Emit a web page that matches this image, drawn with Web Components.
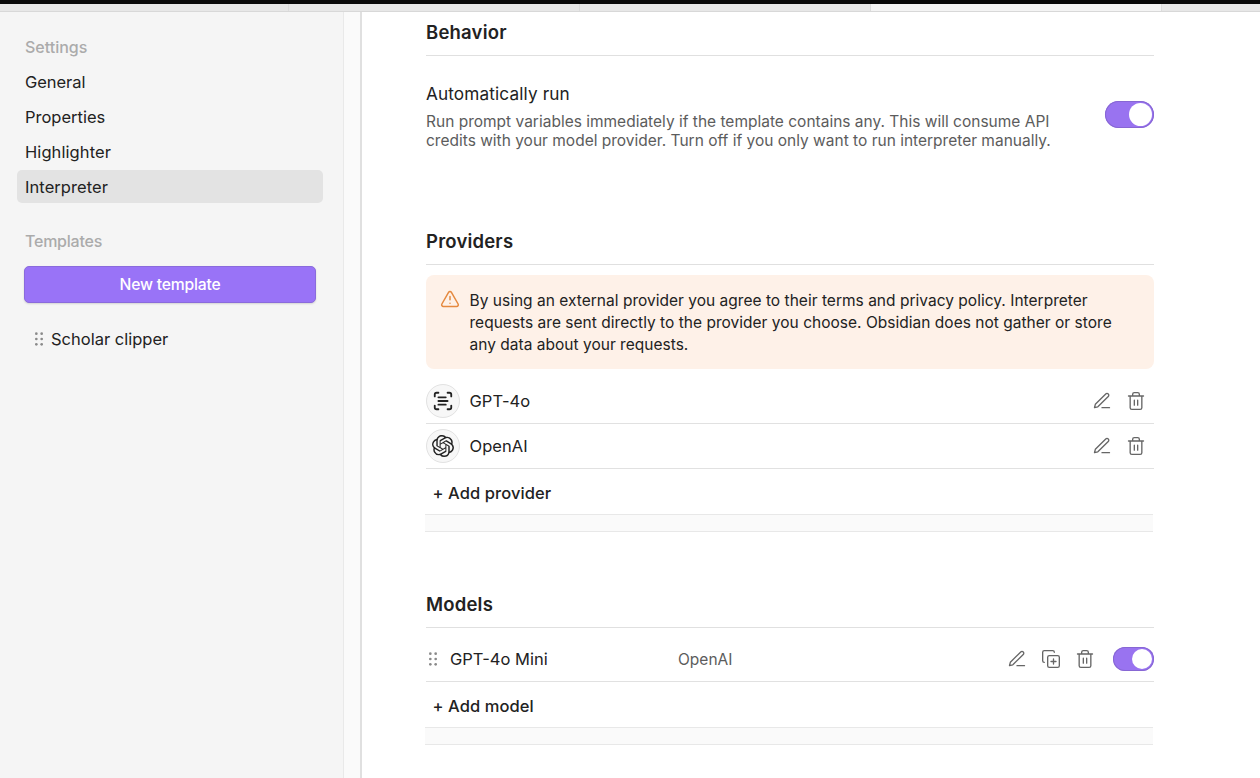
<!DOCTYPE html>
<html lang="en">
<head>
<meta charset="utf-8">
<title>Interpreter settings</title>
<style>
  html, body { margin: 0; height: 100%; overflow: hidden; }
  body { font-family: Inter, "Liberation Sans", sans-serif; color: #222; background: #fff; }
</style>
</head>
<body>
<settings-app></settings-app>
<script>
const define = (name, html, init) => {
  const tpl = document.createElement('template');
  tpl.innerHTML = html;
  customElements.define(name, class extends HTMLElement {
    constructor() {
      super();
      this.attachShadow({ mode: 'open' }).append(tpl.content.cloneNode(true));
    }
    connectedCallback() { if (init) init(this, this.shadowRoot); }
  });
};

const OPENAI = '<path fill="currentColor" stroke="none" d="M22.2819 9.8211a5.9847 5.9847 0 0 0-.5157-4.9108 6.0462 6.0462 0 0 0-6.5098-2.9A6.0651 6.0651 0 0 0 4.9807 4.1818a5.9847 5.9847 0 0 0-3.9977 2.9 6.0462 6.0462 0 0 0 .7427 7.0966 5.98 5.98 0 0 0 .511 4.9107 6.051 6.051 0 0 0 6.5146 2.9001A5.9847 5.9847 0 0 0 13.2599 24a6.0557 6.0557 0 0 0 5.7718-4.2058 5.9894 5.9894 0 0 0 3.9977-2.9001 6.0557 6.0557 0 0 0-.7475-7.0729zm-9.022 12.6081a4.4755 4.4755 0 0 1-2.8764-1.0408l.1419-.0804 4.7783-2.7582a.7948.7948 0 0 0 .3927-.6813v-6.7369l2.02 1.1686a.071.071 0 0 1 .038.052v5.5826a4.504 4.504 0 0 1-4.4945 4.4944zm-9.6607-4.1254a4.4708 4.4708 0 0 1-.5346-3.0137l.142.0852 4.783 2.7582a.7712.7712 0 0 0 .7806 0l5.8428-3.3685v2.3324a.0804.0804 0 0 1-.0332.0615L9.74 19.9502a4.4992 4.4992 0 0 1-6.1408-1.6464zM2.3408 7.8956a4.485 4.485 0 0 1 2.3655-1.9728V11.6a.7664.7664 0 0 0 .3879.6765l5.8144 3.3543-2.0201 1.1685a.0757.0757 0 0 1-.071 0l-4.8303-2.7865A4.504 4.504 0 0 1 2.3408 7.872zm16.5963 3.8558L13.1038 8.364 15.1192 7.2a.0757.0757 0 0 1 .071 0l4.8303 2.7913a4.4944 4.4944 0 0 1-.6765 8.1042v-5.6772a.79.79 0 0 0-.407-.667zm2.0107-3.0231l-.142-.0852-4.7735-2.7818a.7759.7759 0 0 0-.7854 0L9.409 9.2297V6.8974a.0662.0662 0 0 1 .0284-.0615l4.8303-2.7866a4.4992 4.4992 0 0 1 6.6802 4.66zM8.3065 12.863l-2.02-1.1638a.0804.0804 0 0 1-.038-.0567V6.0742a4.4992 4.4992 0 0 1 7.3757-3.4537l-.142.0805L8.704 5.459a.7948.7948 0 0 0-.3927.6813zm1.0976-2.3654l2.602-1.4998 2.6069 1.4998v2.9994l-2.5974 1.4997-2.6067-1.4997Z"/>';
const ICONS = {
  pen: '<path d="M12 20h9M16.5 3.5a2.121 2.121 0 0 1 3 3L7 19l-4 1 1-4Z"/>',
  trash: '<path d="M3 6h18M19 6v14a2 2 0 0 1-2 2H7a2 2 0 0 1-2-2V6M8 6V4a2 2 0 0 1 2-2h4a2 2 0 0 1 2 2v2M10 11v6M14 11v6"/>',
  copy: '<path d="M15 12v6M12 15h6"/><rect x="8" y="8" width="14" height="14" rx="2"/><path d="M4 16a2 2 0 0 1-2-2V4a2 2 0 0 1 2-2h10a2 2 0 0 1 2 2"/>',
  warn: '<path d="m21.73 18-8-14a2 2 0 0 0-3.48 0l-8 14A2 2 0 0 0 4 21h16a2 2 0 0 0 1.73-3M12 9v4M12 17h.01"/>',
  scan: '<path d="M3 7V5a2 2 0 0 1 2-2h2M17 3h2a2 2 0 0 1 2 2v2M21 17v2a2 2 0 0 1-2 2h-2M7 21H5a2 2 0 0 1-2-2v-2M7 8h8M7 12h10M7 16h8"/>',
  grip: '<g fill="currentColor" stroke="none"><circle cx="8" cy="4" r="2"/><circle cx="16" cy="4" r="2"/><circle cx="8" cy="12" r="2"/><circle cx="16" cy="12" r="2"/><circle cx="8" cy="20" r="2"/><circle cx="16" cy="20" r="2"/></g>',
  openai: OPENAI
};

define('ui-icon', `<style>
  :host { display: block; flex: none; width: var(--size, 20px); height: var(--size, 20px); }
  svg { display: block; width: 100%; height: 100%; fill: none; stroke: currentColor;
        stroke-width: var(--stroke, 1.6); stroke-linecap: round; stroke-linejoin: round; }
</style><svg viewBox="0 0 24 24"></svg>`, (el, root) => {
  root.querySelector('svg').innerHTML = ICONS[el.getAttribute('name')];
});

define('tab-strip', `<style>
  :host { display: grid; grid-template-columns: 288px 1px 290px 1px 290px 1px 290px 1px 1fr;
          height: 7px; border-top: 4px solid #080808; border-bottom: 1px solid #d8d8d8; background: #e7e7e7; flex: none; box-sizing: content-box; }
  i { background: #dcdcdc; } b { background: #f4f4f4; }
</style><span></span><i></i><span></span><i></i><span></span><i></i><b></b><i></i><span></span>`);

define('nav-title', `<style>
  :host { display: flex; align-items: center; height: 35px; margin-bottom: 1px; padding-left: 8px; font-size: 16px; font-weight: 500; color: #ababab; }
</style><slot></slot>`);

define('nav-item', `<style>
  :host { display: flex; align-items: center; height: 33px; margin-bottom: 2px; padding-left: 8px; border-radius: 5px; font-size: 16.5px; }
  :host([active]) { background: #e3e3e3; }
</style><slot></slot>`);

define('template-item', `<style>
  :host { display: flex; align-items: center; height: 34px; padding-left: 14px; gap: 4px; font-size: 16.5px; }
  ui-icon { --size: 16px; color: #8a8a8a; }
</style><ui-icon name="grip"></ui-icon><slot></slot>`);

define('primary-button', `<style>
  :host { display: flex; align-items: center; justify-content: center; height: 37px; margin: 0 7px; box-sizing: border-box;
          border: 1px solid #8a6bdc; border-radius: 5px; background: #9973f7; color: #fff; font-size: 15.7px; font-weight: 500; letter-spacing: -.2px;
          box-shadow: 0 1px 2px rgba(0,0,0,.14); }
</style><slot></slot>`);

define('side-bar', `<style>
  :host { display: block; width: 344px; box-sizing: border-box; padding: 17px 20px 0 17px; background: #f5f5f5; border-right: 1px solid #e9e9e9; flex: none; }
  .templates { margin-top: 20px; margin-bottom: 8px; letter-spacing: -.23px; }
  template-item { margin-top: 19px; }
</style>
<nav-title>Settings</nav-title>
<nav-item style="letter-spacing:-.05px">General</nav-item>
<nav-item>Properties</nav-item>
<nav-item style="letter-spacing:.08px">Highlighter</nav-item>
<nav-item active style="letter-spacing:.07px">Interpreter</nav-item>
<nav-title class="templates">Templates</nav-title>
<primary-button>New template</primary-button>
<template-item>Scholar clipper</template-item>`);

define('section-title', `<style>
  :host { display: flex; align-items: center; height: 46px; border-bottom: 1px solid #e0e0e0; font-size: 18.5px; font-weight: 600; letter-spacing: .2px; }
</style><slot></slot>`);

define('toggle-switch', `<style>
  :host { display: flex; justify-content: flex-end; align-items: center; flex: none; width: var(--w, 49px); height: var(--h, 27px); padding-right: 2px;
          box-sizing: border-box; border-radius: 20px; background: #9973f0; box-shadow: inset 0 0 0 1px #8767d3; }
  i { width: var(--k, 23px); height: var(--k, 23px); border-radius: 50%; background: #fff; }
</style><i></i>`);

define('setting-row', `<style>
  :host { display: flex; justify-content: space-between; }
  .name { display: block; font-size: 17.2px; line-height: 24px; letter-spacing: .13px; }
  .desc { display: block; margin-top: 5.5px; font-size: 15.5px; line-height: 19.5px; color: #5c5c5c; white-space: nowrap; }
  toggle-switch { margin-top: 19px; }
</style><div><slot class="name" name="name"></slot><slot class="desc"></slot></div><toggle-switch></toggle-switch>`);

define('call-out', `<style>
  :host { display: flex; box-sizing: border-box; height: 94px; padding: 14px 14px 0; border-radius: 8px; background: #fef1e8;
          font-size: 15.5px; line-height: 22px; letter-spacing: .018px; white-space: nowrap; }
  ui-icon { --stroke: 1.8; margin-right: 9.5px; color: #e5893f; }
  div { padding-top: 1px; }
</style><ui-icon name="warn"></ui-icon><div><slot></slot></div>`);

define('provider-row', `<style>
  :host { display: flex; align-items: center; height: 44px; border-bottom: 1px solid #e1e1e1; font-size: 16.5px; letter-spacing: .04px; }
  .badge { display: grid; place-items: center; width: 34px; height: 34px; margin-right: 9.5px; box-sizing: border-box; border: 1px solid #e2e2e2; border-radius: 50%; background: #f7f7f7; }
  .badge ui-icon { --size: 22px; --stroke: 2; }
  .tools { display: flex; gap: 14px; margin-left: auto; padding-right: 8px; color: #666; }
</style><span class="badge"><ui-icon></ui-icon></span><slot></slot><span class="tools"><ui-icon name="pen"></ui-icon><ui-icon name="trash"></ui-icon></span>`, (el, root) => {
  const i = document.createElement('ui-icon');
  i.setAttribute('name', el.getAttribute('icon'));
  root.querySelector('.badge').replaceChildren(i);
});

define('model-row', `<style>
  :host { display: flex; align-items: center; height: 44px; border-bottom: 1px solid #e1e1e1; font-size: 16.5px; }
  .grip { --size: 16px; color: #8a8a8a; margin: 0 9px 0 -1px; }
  .name { width: 228px; }
  .provider { font-size: 15.5px; color: #5c5c5c; }
  .tools { display: flex; gap: 14px; align-items: center; margin-left: auto; color: #666; }
  toggle-switch { --w: 41px; --h: 24px; --k: 20px; margin-left: 4px; }
</style><ui-icon class="grip" name="grip"></ui-icon><span class="name"><slot></slot></span><span class="provider"><slot name="provider"></slot></span>
<span class="tools"><ui-icon name="pen"></ui-icon><ui-icon name="copy"></ui-icon><ui-icon name="trash"></ui-icon><toggle-switch></toggle-switch></span>`);

define('add-row', `<style>
  :host { display: block; font-size: 16.5px; font-weight: 500; letter-spacing: .08px; }
  .label { display: flex; align-items: center; height: 45px; padding: 3px 0 0 6.5px; box-sizing: border-box; }
  .foot { height: 16px; margin: 0 1px 0 -1px; background: #fafafa; border: solid #e8e8e8; border-width: 1px 0; }
</style><div class="label"><slot></slot></div><div class="foot"></div>`);

define('settings-app', `<style>
  :host { display: flex; flex-direction: column; height: 778px; width: 1260px; overflow: hidden; }
  .body { display: flex; flex: 1; min-height: 0; }
  .gutter { width: 16px; background: #fafafa; border-right: 2px solid #e0e0e0; flex: none; }
  main { width: 728px; margin-left: 64px; margin-top: -3px; }
  setting-row { margin-top: 26px; }
  .providers { margin-top: 67.5px; }
  call-out { margin: 10px 0 10px; }
  .models { margin-top: 49px; }
  model-row { margin-top: 9px; }
</style>
<tab-strip></tab-strip>
<div class="body">
  <side-bar></side-bar><div class="gutter"></div>
  <main>
    <section-title>Behavior</section-title>
    <setting-row><span slot="name">Automatically run</span>Run prompt variables immediately if the template contains any. This will consume API<br>credits with your model provider. Turn off if you only want to run interpreter manually.</setting-row>
    <section-title class="providers">Providers</section-title>
    <call-out>By using an external provider you agree to their terms and privacy policy. Interpreter<br>requests are sent directly to the provider you choose. Obsidian does not gather or store<br>any data about your requests.</call-out>
    <provider-row icon="scan">GPT-4o</provider-row>
    <provider-row icon="openai">OpenAI</provider-row>
    <add-row>+ Add provider</add-row>
    <section-title class="models">Models</section-title>
    <model-row>GPT-4o Mini<span slot="provider">OpenAI</span></model-row>
    <add-row>+ Add model</add-row>
  </main>
</div>`);
</script>
</body>
</html>
